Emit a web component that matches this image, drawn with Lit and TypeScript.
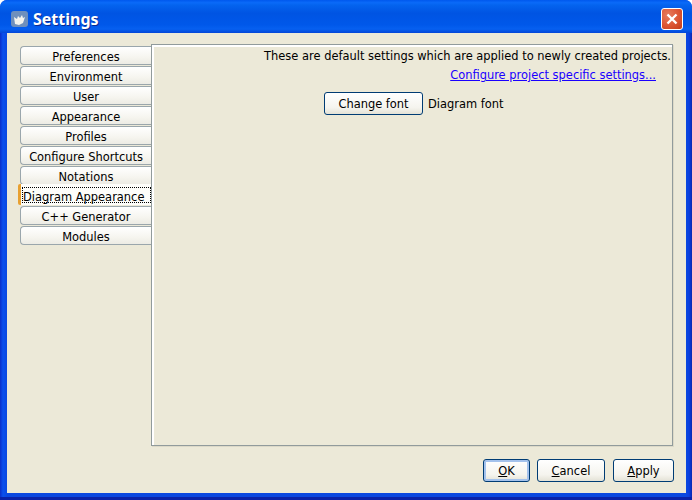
import { LitElement, html, css } from "lit";
import { customElement } from "lit/decorators.js";

const TABS = ["Preferences","Environment","User","Appearance","Profiles","Configure Shortcuts","Notations","Diagram Appearance","C++ Generator","Modules"];

@customElement("app-root")
export class AppRoot extends LitElement {
  static styles = css`
    :host { display: block; width: 692px; height: 500px; font-family: "DejaVu Sans", sans-serif; font-size: 11.44px; color: #000; overflow: hidden; }
    .win { width: 692px; height: 500px; display: flex; flex-direction: column; box-sizing: border-box; border-radius: 7px 7px 0 0;
      background: #0a3fd8; overflow: hidden; }
    .title { height: 33px; flex: none; display: flex; align-items: center; padding: 7px 9px 3px 11px; gap: 5px; box-sizing: border-box;
      background: linear-gradient(180deg, #0058ee 0%, #0a6af8 8%, #0463ee 16%, #0054e3 40%, #0058ea 75%, #0660f0 88%, #0346d8 100%); }
    .title-text { color: #fff; font-family: "Noto Sans", sans-serif; font-weight: bold; font-size: 16px; text-shadow: 1px 1px 0 #0a2a90; flex: 1; }
    .logo { width: 17px; height: 16px; flex: none; display: block; }
    .close { width: 22px; height: 22px; border: 1px solid #fff; border-radius: 3px; box-sizing: border-box; flex: none; display: flex; align-items: center; justify-content: center;
      background: radial-gradient(circle at 30% 30%, #e67c5e 0%, #dc5534 55%, #c23c18 100%); }
    .close svg { display: block; }
    .frame { flex: 1; min-height: 0; display: flex; padding: 0 6px 7px 7px;
      background: linear-gradient(90deg, #0a2ec8 0, #0a50ee 3px, #0a48e0 7px, #0a48e0 calc(100% - 6px), #0a3fe0 calc(100% - 3px), #0a28b0 100%); box-shadow: inset 0 -3px 0 #0a22a8; }
    .body { flex: 1; min-width: 0; background: #ece9d8; display: flex; flex-direction: column; padding: 11px 12px 12px 13px; box-sizing: border-box; }
    .main { display: flex; height: 402px; flex: none; }
    .tabs { width: 131px; flex: none; display: flex; flex-direction: column; gap: 1px; padding-top: 2px; }
    .tab { height: 19px; box-sizing: border-box; border: 1px solid #9aa6ac; border-right: none; border-radius: 4px 0 0 4px;
      background: linear-gradient(180deg, #fff 0%, #f6f5ef 60%, #ecebe4 100%); text-align: center; line-height: 20px; white-space: nowrap; color: #000; }
    .tab.sel { margin: -2px 0 0 -2px; width: 133px; height: 21px; padding-top: 3px; background: #fdfdfa; border: none; border-left: 3px solid #e8a030; border-radius: 2px 0 0 2px; position: relative; z-index: 1; text-align: left; }
    .tab.sel span { display: block; height: 16px; line-height: 16px; padding-top: 1px; margin-left: 1px; box-sizing: border-box; border: 1px dotted #000; }
    .panel { flex: 1; min-width: 0; margin-right: 1px; box-sizing: border-box; border: 1px solid #919b9c; box-shadow: inset 2px 2px 0 #fff, 1px 1px 0 #dcd9c8;
      display: flex; flex-direction: column; align-items: flex-end; padding: 3px 1px 0 0; }
    .note { line-height: 16px; white-space: nowrap; }
    .link { color: #1a00ff; text-decoration: underline; margin-top: 4px; margin-right: 15px; line-height: 15px; white-space: nowrap; }
    .row { align-self: flex-start; display: flex; align-items: center; gap: 5px; margin: 9px 0 0 172px; }
    button { font: inherit; color: #000; height: 23px; padding: 0; box-sizing: border-box; border: 1px solid #003c74; border-radius: 3px;
      background: linear-gradient(180deg, #fff 0%, #f5f4ee 70%, #e4e2d6 100%); }
    .change { width: 99px; }
    .footer { display: flex; justify-content: flex-end; margin-top: 13px; }
    .ok { width: 47px; box-shadow: inset 0 0 0 2px #a4c2ec; }
    .cancel { width: 68px; margin-left: 7px; }
    .apply { width: 61px; margin-left: 8px; }
    u { text-decoration: underline; }
  `;
  render() {
    return html`<div class="win">
      <div class="title">
        <svg class="logo" viewBox="0 0 17 16"><rect width="17" height="16" rx="3" fill="#6f90bc"/><path d="M3 6l3 2 1-3 2 2 2-3 1 3 2-1-2 6-4 2-4-1z" fill="#f4f4ee"/></svg>
        <span class="title-text">Settings</span>
        <div class="close"><svg width="12" height="12" viewBox="0 0 12 12"><path d="M1.5 1.5l9 9M10.5 1.5l-9 9" stroke="#fff" stroke-width="2.4" fill="none"/></svg></div>
      </div>
      <div class="frame"><div class="body">
        <div class="main">
          <div class="tabs">
            ${TABS.map(t => t === "Diagram Appearance"
              ? html`<div class="tab sel"><span>${t}</span></div>`
              : html`<div class="tab">${t}</div>`)}
          </div>
          <div class="panel">
            <div class="note">These are default settings which are applied to newly created projects.</div>
            <div class="link">Configure project specific settings...</div>
            <div class="row"><button class="change">Change font</button><span>Diagram font</span></div>
          </div>
        </div>
        <div class="footer">
          <button class="ok"><u>O</u>K</button>
          <button class="cancel"><u>C</u>ancel</button>
          <button class="apply"><u>A</u>pply</button>
        </div>
      </div></div>
    </div>`;
  }
}
